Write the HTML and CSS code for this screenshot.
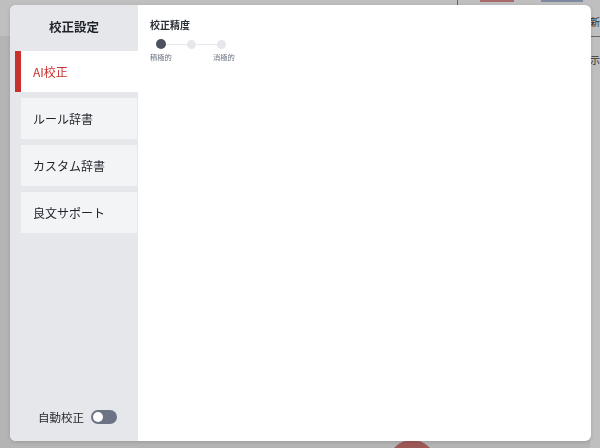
FILE: index.html
```html
<!DOCTYPE html>
<html lang="ja">
<head>
    <meta charset="UTF-8">
    <title>校正設定</title>
    <link rel="stylesheet" href="styles.css">
</head>
<body>

<div class="page">
    <div class="page_main">
        <div class="page_header">
            <div class="header_space"></div>
            <div class="header_divider"></div>
            <div class="header_btn header_btn_red"></div>
            <div class="header_btn header_btn_blue"></div>
        </div>
    </div>
    <div class="page_side">
        <div class="side_head">新</div>
        <div class="side_text">示</div>
    </div>
    <div class="fab"></div>
</div>

<div class="overlay">
    <div class="modal">
        <div class="side">
            <div class="side_title">校正設定</div>
            <div class="side_item side_item_active">AI校正</div>
            <div class="side_item">ルール辞書</div>
            <div class="side_item">カスタム辞書</div>
            <div class="side_item">良文サポート</div>
            <div class="side_space"></div>
            <div class="auto_row">
                <span>自動校正</span>
                <span class="toggle"><span class="toggle_knob"></span></span>
            </div>
        </div>

        <div class="content">
            <div class="content_title">校正精度</div>
            <div class="slider">
                <span class="dot dot_on"></span>
                <span class="line"></span>
                <span class="dot"></span>
                <span class="line"></span>
                <span class="dot"></span>
            </div>
            <div class="slider_labels">
                <span>積極的</span>
                <span>消極的</span>
            </div>
        </div>
    </div>
</div>

</body>
</html>
```

FILE: styles.css
```css
* {
    box-sizing: border-box;
    margin: 0;
    padding: 0;
}

body {
    font-family: "Noto Sans CJK JP", "Noto Sans", sans-serif;
    color: #1f2329;
    width: 600px;
    height: 448px;
    overflow: hidden;
    background: #f0f0f0;
}

/* 背面のページ */
.page {
    height: 448px;
    display: flex;
    position: relative;
    overflow: hidden;
}

.page_main {
    flex: 1;
}

.page_header {
    height: 36px;
    background: #fff;
    display: flex;
    align-items: flex-start;
}

.header_space {
    width: 457px;
}

.header_divider {
    width: 1px;
    height: 6px;
    background: #888;
}

.header_btn {
    height: 2px;
}

.header_btn_red {
    width: 34px;
    margin-left: 22px;
    background: #e58b8b;
}

.header_btn_blue {
    width: 42px;
    margin-left: 27px;
    background: #a9b8d8;
}

.page_side {
    width: 10px;
    background: #fff;
    font-size: 10px;
    line-height: 12px;
    color: #444;
}

.side_head {
    height: 37px;
    padding-top: 16px;
    border-bottom: 1px solid #8a8a8a;
}

.side_text {
    padding-top: 17px;
}

.fab {
    position: absolute;
    left: 388px;
    top: 440px;
    width: 48px;
    height: 48px;
    border-radius: 50%;
    background: #d27575;
}

/* モーダル */
.overlay {
    position: fixed;
    top: 0;
    left: 0;
    right: 0;
    bottom: 0;
    background: rgba(0, 0, 0, 0.25);
    padding: 5px 9px 7px 10px;
}

.modal {
    height: 100%;
    display: flex;
    background: #fff;
    border-radius: 6px;
    overflow: hidden;
    box-shadow: 0 1px 4px rgba(0, 0, 0, 0.15);
}

.side {
    width: 128px;
    background: #e5e7eb;
    display: flex;
    flex-direction: column;
    gap: 6px;
}

.side_title {
    height: 40px;
    padding-top: 13px;
    text-align: center;
    font-size: 12.5px;
    font-weight: bold;
    line-height: 18px;
}

.side_item {
    height: 41px;
    margin-left: 11px;
    margin-right: 1px;
    padding-left: 12px;
    background: #f3f4f6;
    font-size: 12px;
    line-height: 41px;
}

.side_item_active {
    margin-left: 5px;
    margin-right: 0;
    border-left: 6px solid #c8302c;
    background: #fff;
    color: #c8302c;
}

.side_space {
    flex: 1;
}

.auto_row {
    height: 14px;
    margin-bottom: 17px;
    display: flex;
    align-items: center;
    padding-left: 28px;
    gap: 7px;
    font-size: 11.5px;
}

.toggle {
    width: 26px;
    height: 14px;
    border-radius: 7px;
    background: #6b7384;
    padding: 2px;
    display: flex;
}

.toggle_knob {
    width: 10px;
    height: 10px;
    border-radius: 50%;
    background: #fff;
}

.content {
    flex: 1;
    padding: 13px 12px;
}

.content_title {
    font-size: 10px;
    font-weight: bold;
    line-height: 14px;
    color: #2b2f36;
}

.slider {
    display: flex;
    align-items: center;
    margin-top: 7px;
    padding-left: 6px;
    height: 10px;
}

.dot {
    width: 9px;
    height: 9px;
    border-radius: 50%;
    background: #e6e7eb;
}

.dot_on {
    width: 10px;
    height: 10px;
    background: #4b5160;
}

.line {
    width: 21px;
    height: 1px;
    background: #e6e7eb;
}

.slider_labels {
    display: flex;
    gap: 41px;
    margin-top: 3px;
    font-size: 7.3px;
    color: #6b7280;
    line-height: 10px;
}
```
